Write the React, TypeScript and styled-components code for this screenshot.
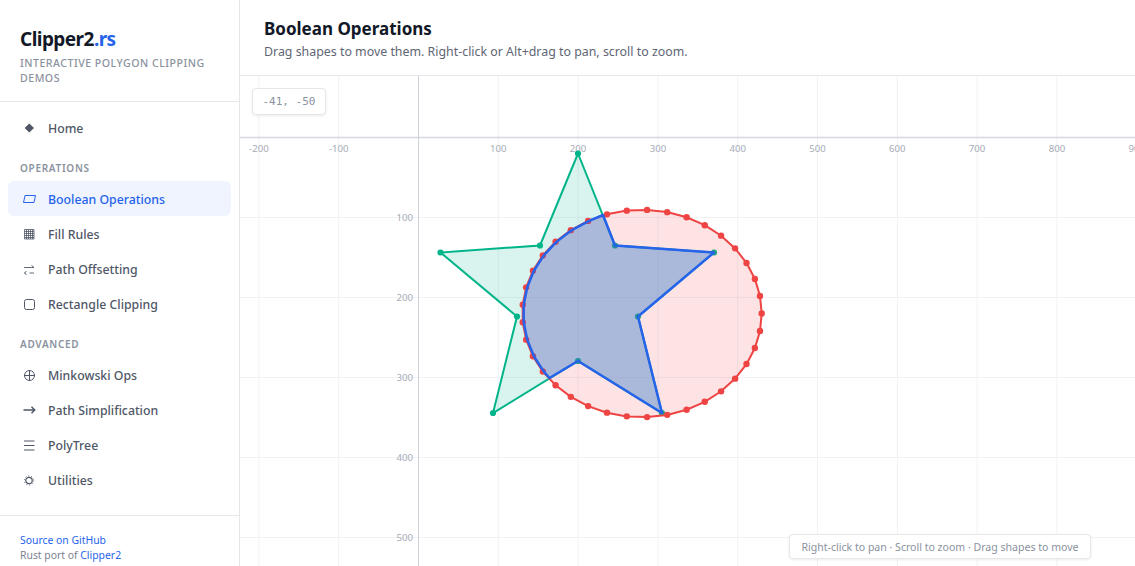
import styled, { createGlobalStyle } from 'styled-components';

const GlobalStyle = createGlobalStyle`
  html, body, #root {
    height: 100%;
    margin: 0;
  }
  body {
    font-family: 'Noto Sans', sans-serif;
    background: #fff;
    overflow: hidden;
  }
  * {
    box-sizing: border-box;
  }
`;

const Layout = styled.div`
  display: flex;
  width: 100%;
  height: 100%;
`;
const Sidebar = styled.aside`
  display: flex;
  flex-direction: column;
  flex: 0 0 240px;
  height: 100%;
  border-right: 1px solid #e5e7eb;
`;
const Brand = styled.div`
  height: 102px;
  padding: 26px 20px 0;
  border-bottom: 1px solid #e5e7eb;
`;
const Logo = styled.div`
  font-size: 19px;
  line-height: 27px;
  font-weight: 700;
  letter-spacing: -0.55px;
  color: #111827;

  & span {
    color: #2563eb;
  }
`;
const Tagline = styled.div`
  margin-top: 3px;
  font-size: 10.6px;
  line-height: 15px;
  font-weight: 500;
  letter-spacing: 0.5px;
  text-transform: uppercase;
  color: #8b92a0;
`;
const Nav = styled.nav`
  flex: 1;
  padding: 8px 8px 0;
`;
const NavItem = styled.a<{ $active?: boolean }>`
  display: flex;
  align-items: center;
  gap: 12px;
  height: 35px;
  padding: 0 12px;
  border-radius: 6px;
  font-size: 12.3px;
  font-weight: 500;
  color: ${(p) => (p.$active ? '#2563eb' : '#4f5766')};
  background: ${(p) => (p.$active ? '#eff4fe' : 'transparent')};
  text-decoration: none;
`;
const NavLabel = styled.span`
  padding-top: 2px;
`;
const NavIcon = styled.svg`
  flex: 0 0 16px;
  width: 16px;
  height: 16px;
  fill: none;
  stroke: currentColor;
  stroke-width: 1;
`;
const SectionLabel = styled.div`
  margin-top: 16px;
  margin-bottom: 6px;
  padding: 0 12px;
  font-size: 10px;
  line-height: 14px;
  font-weight: 600;
  letter-spacing: 0.7px;
  text-transform: uppercase;
  color: #8b92a0;
`;
const SideFooter = styled.footer`
  height: 51px;
  padding: 17px 20px 0;
  border-top: 1px solid #e5e7eb;
  font-size: 10.4px;
  line-height: 15px;
  color: #7b8290;

  & a {
    color: #2563eb;
    text-decoration: none;
  }
`;
const Main = styled.main`
  display: flex;
  flex-direction: column;
  flex: 1;
  min-width: 0;
  height: 100%;
`;
const PageHeader = styled.header`
  flex: 0 0 76px;
  padding: 16px 24px 0;
  border-bottom: 1px solid #e5e7eb;
`;
const Title = styled.h1`
  margin: 0;
  font-size: 17px;
  line-height: 25px;
  font-weight: 700;
  color: #111827;
`;
const Subtitle = styled.p`
  margin: 2px 0 0;
  font-size: 12.38px;
  line-height: 18px;
  color: #5f6674;
`;
const Stage = styled.div`
  position: relative;
  flex: 1;
  min-height: 0;
  overflow: hidden;
`;
const Plot = styled.svg`
  display: block;
  width: 100%;
  height: 100%;
`;
const AxisLabel = styled.text`
  font-family: 'Noto Sans', sans-serif;
  font-size: 9.6px;
  fill: #a5abb6;
`;
const CoordBadge = styled.div`
  position: absolute;
  top: 12px;
  left: 12px;
  width: 74px;
  height: 27px;
  border: 1px solid #e5e7eb;
  border-radius: 4px;
  background: #fff;
  box-shadow: 0 1px 3px rgba(0, 0, 0, 0.08);
  font-family: 'DejaVu Sans Mono', monospace;
  font-size: 11px;
  line-height: 25px;
  text-align: center;
  color: #8b92a0;
`;
const Hint = styled.div`
  position: absolute;
  top: 458px;
  left: 549px;
  width: 302px;
  height: 25px;
  border: 1px solid #e5e7eb;
  border-radius: 4px;
  background: #fff;
  box-shadow: 0 1px 3px rgba(0, 0, 0, 0.08);
  font-size: 10.55px;
  line-height: 24px;
  text-align: center;
  color: #8b92a0;
`;

const icons = {
  home: <polygon points="9.3,3.4 14,8 9.3,12.6 4.6,8" fill="currentColor" stroke="none" />,
  boolean: <polygon points="5,4.5 15.5,4.5 14,11.5 3.5,11.5" />,
  fill: (
    <path
      d="M4.5 3.5h9.5v9.5h-9.5zM4.5 5.5h9.5M4.5 7.5h9.5M4.5 9.5h9.5M4.5 11.5h9.5M6.5 3.5v9.5M8.5 3.5v9.5M10.5 3.5v9.5M12.5 3.5v9.5"
      strokeWidth={0.8}
    />
  ),
  offset: <path d="M4 6.5h10M11.5 4.5l2.5 2M14 12h-4.5M4.5 12h1M6.5 10l-2 2 2 2" strokeWidth={0.9} />,
  rect: <rect x={4.5} y={3.5} width={10} height={10} rx={2} />,
  minkowski: <path d="M9.5 3v11M4 8.5h11M14.5 8.5a5 5 0 1 1-10 0a5 5 0 1 1 10 0z" />,
  arrow: <path d="M3.5 8h11M11.5 4.8l3.2 3.2-3.2 3.2" strokeWidth={1.5} />,
  tree: <path d="M4 4h10.5M4 8.5h10.5M4 13h10.5" />,
  utils: (
    <>
      <circle cx={9} cy={8.5} r={3.2} strokeWidth={1.2} />
      <circle cx={9} cy={8.5} r={4.6} strokeWidth={0.9} strokeDasharray="1 1.9" />
    </>
  ),
};

const Icon = ({ name }: { name: keyof typeof icons }) => <NavIcon viewBox="0 0 16 16">{icons[name]}</NavIcon>;

const OX = 418.5;
const OY = 137.5;
const SX = 0.798;
const SY = 0.8;

const xTicks = [-200, -100, 100, 200, 300, 400, 500, 600, 700, 800, 900];
const yTicks = [100, 200, 300, 400, 500];

const star: [number, number][] = [
  [578, 153.5],
  [615, 245.5],
  [714, 252.5],
  [638, 316.5],
  [662, 413],
  [578, 361],
  [493, 413],
  [517, 316.5],
  [440.5, 252.5],
  [540, 245.5],
];

const ellipse: [number, number][] = Array.from({ length: 37 }, (_, k) => {
  const a = (k * 2 * Math.PI) / 37;
  return [642 + 119.7 * Math.cos(a), 313.5 - 103.7 * Math.sin(a)];
});

const result: [number, number][] = [
  [603, 215],
  [615, 245.5],
  [714, 252.5],
  [638, 316.5],
  [662, 413],
  [578, 361],
  [549.5, 378],
  ...ellipse.slice(12, 23).reverse().map(([x, y]): [number, number] => [x + 1, y]),
];

const pts = (list: [number, number][]) => list.map(([x, y]) => `${x.toFixed(1)},${y.toFixed(1)}`).join(' ');

function App() {
  return (
    <Layout>
      <GlobalStyle />
      <Sidebar>
        <Brand>
          <Logo>
            Clipper2<span>.rs</span>
          </Logo>
          <Tagline>Interactive polygon clipping demos</Tagline>
        </Brand>
        <Nav>
          <NavItem href="#">
            <Icon name="home" />
            <NavLabel>Home</NavLabel>
          </NavItem>
          <SectionLabel>Operations</SectionLabel>
          <NavItem href="#" $active>
            <Icon name="boolean" />
            <NavLabel>Boolean Operations</NavLabel>
          </NavItem>
          <NavItem href="#">
            <Icon name="fill" />
            <NavLabel>Fill Rules</NavLabel>
          </NavItem>
          <NavItem href="#">
            <Icon name="offset" />
            <NavLabel>Path Offsetting</NavLabel>
          </NavItem>
          <NavItem href="#">
            <Icon name="rect" />
            <NavLabel>Rectangle Clipping</NavLabel>
          </NavItem>
          <SectionLabel>Advanced</SectionLabel>
          <NavItem href="#">
            <Icon name="minkowski" />
            <NavLabel>Minkowski Ops</NavLabel>
          </NavItem>
          <NavItem href="#">
            <Icon name="arrow" />
            <NavLabel>Path Simplification</NavLabel>
          </NavItem>
          <NavItem href="#">
            <Icon name="tree" />
            <NavLabel>PolyTree</NavLabel>
          </NavItem>
          <NavItem href="#">
            <Icon name="utils" />
            <NavLabel>Utilities</NavLabel>
          </NavItem>
        </Nav>
        <SideFooter>
          <a href="#">Source on GitHub</a>
          <br />
          Rust port of <a href="#">Clipper2</a>
        </SideFooter>
      </Sidebar>
      <Main>
        <PageHeader>
          <Title>Boolean Operations</Title>
          <Subtitle>Drag shapes to move them. Right-click or Alt+drag to pan, scroll to zoom.</Subtitle>
        </PageHeader>
        <Stage>
          <Plot viewBox="240 76 895 490" preserveAspectRatio="xMinYMin slice">
            {xTicks.map((t) => (
              <line key={t} x1={OX + t * SX} x2={OX + t * SX} y1={76} y2={566} stroke="#f1f2f5" />
            ))}
            {yTicks.map((t) => (
              <line key={t} x1={240} x2={1135} y1={OY + t * SY} y2={OY + t * SY} stroke="#f1f2f5" />
            ))}
            <line x1={240} x2={1135} y1={OY} y2={OY} stroke="#d5d8e0" strokeWidth={1.5} />
            <line x1={OX} x2={OX} y1={76} y2={566} stroke="#cdd1da" />
            {xTicks.map((t) => (
              <AxisLabel key={t} x={OX + t * SX} y={152} textAnchor="middle">
                {t}
              </AxisLabel>
            ))}
            {yTicks.map((t) => (
              <AxisLabel key={t} x={413} y={OY + t * SY + 3.5} textAnchor="end">
                {t}
              </AxisLabel>
            ))}
            <polygon points={pts(star)} fill="rgba(0,180,138,0.15)" stroke="#00b48a" strokeWidth={2} />
            {star.map(([x, y], i) => (
              <circle key={i} cx={x} cy={y} r={3.1} fill="#00b48a" />
            ))}
            <polygon points={pts(ellipse)} fill="rgba(239,68,68,0.15)" stroke="#ef4444" strokeWidth={2} />
            {ellipse.map(([x, y], i) => (
              <circle key={i} cx={x} cy={y} r={3.2} fill="#ef4444" />
            ))}
            <polygon
              points={pts(result)}
              fill="rgba(37,99,235,0.27)"
              stroke="#2563eb"
              strokeWidth={2.5}
              strokeLinejoin="round"
            />
          </Plot>
          <CoordBadge>-41, -50</CoordBadge>
          <Hint>Right-click to pan · Scroll to zoom · Drag shapes to move</Hint>
        </Stage>
      </Main>
    </Layout>
  );
}
export default App;
